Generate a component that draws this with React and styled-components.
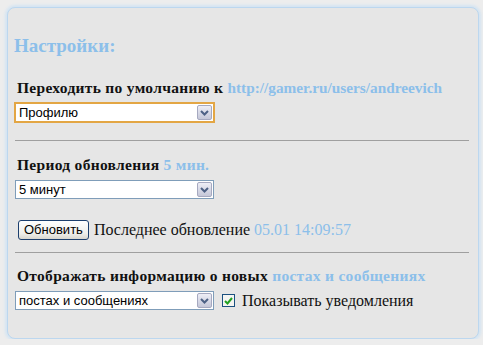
import React from "react";
import styled, { createGlobalStyle } from "styled-components";

const Global = createGlobalStyle`
  body {
    margin: 0;
    background: #ededed;
    font-family: "Liberation Serif", "Times New Roman", serif;
  }
`;

const Panel = styled.div`
  margin: 7px 0 0 7px;
  width: 472px;
  height: 332px;
  box-sizing: border-box;
  background: #e6e6e6;
  border: 1px solid #bcd7ef;
  border-radius: 8px;
  box-shadow: 0 0 3px 2px #d3e4f3;
  padding: 0 7px 0 6px;
`;

const Title = styled.h2`
  margin: 0;
  padding-top: 27px;
  font-size: 19px;
  font-weight: bold;
  color: #8cbfea;
  line-height: 22px;
`;

const Label = styled.div`
  font-size: 15.5px;
  letter-spacing: 0.3px;
  font-weight: bold;
  color: #111;
  line-height: 18px;
  margin-top: ${(p) => p.$top || 0}px;
  padding-left: 3px;
`;

const Accent = styled.span`
  color: #8cbfea;
  font-size: ${(p) => p.$size || 15.5}px;
  letter-spacing: ${(p) => (p.$tight ? "0" : "inherit")};
  font-weight: ${(p) => (p.$bold ? "bold" : "normal")};
`;

const Row = styled.div`
  display: flex;
  align-items: center;
  gap: ${(p) => p.$gap || 6}px;
  margin-top: ${(p) => p.$top || 0}px;
`;

const Select = styled.div`
  display: flex;
  align-items: stretch;
  width: ${(p) => (p.$focus ? 201 : 199)}px;
  height: ${(p) => (p.$focus ? 21 : 19)}px;
  box-sizing: border-box;
  border: ${(p) => (p.$focus ? "2px solid #e3a644" : "1px solid #7f9db9")};
  background: #fff;
  margin-left: ${(p) => (p.$focus ? 0 : 1)}px;
`;

const SelectText = styled.div`
  flex: 1;
  font-family: "Liberation Sans", Arial, sans-serif;
  font-size: 13px;
  line-height: 17px;
  padding-left: 3px;
  color: #000;
`;

const ArrowBox = styled.div`
  width: 15px;
  margin: 1px;
  box-sizing: border-box;
  border: 1px solid #a6a9c0;
  border-radius: 2px;
  background: linear-gradient(180deg, #eeeef6 0%, #d4d6e4 60%, #c5c7d8 100%);
  display: flex;
  align-items: center;
  justify-content: center;
`;

const Divider = styled.hr`
  border: 0;
  border-top: 1px solid #9f9f9f;
  margin: ${(p) => p.$top}px 2px 0 1px;
`;

const Button = styled.button`
  font-family: "Liberation Sans", Arial, sans-serif;
  font-size: 13px;
  height: 20px;
  padding: 0 5px;
  margin-left: 4px;
  border: 1px solid #1c3f6e;
  border-radius: 3px;
  background: linear-gradient(180deg, #ffffff 0%, #eeeeea 70%, #d8d6cf 100%);
  color: #000;
  line-height: 16px;
`;

const Plain = styled.span`
  font-size: 16px;
  color: #111;
`;

const Check = styled.span`
  width: 13px;
  height: 13px;
  box-sizing: border-box;
  border: 1px solid #1c5180;
  background: #f5f5f2;
  display: inline-flex;
  align-items: center;
  justify-content: center;
`;

const CheckRow = styled.label`
  display: flex;
  align-items: center;
  gap: 7px;
  margin-left: 4px;
`;

const Chevron = () => (
  <svg width="9" height="6" viewBox="0 0 9 6">
    <path d="M1 1 L4.5 4.5 L8 1" stroke="#4d6185" strokeWidth="2" fill="none" />
  </svg>
);

const Dropdown = ({ value, focus }) => (
  <Select $focus={focus}>
    <SelectText>{value}</SelectText>
    <ArrowBox>
      <Chevron />
    </ArrowBox>
  </Select>
);

export default function App() {
  return (
    <>
      <Global />
      <Panel>
        <Title>Настройки:</Title>
        <Label $top={22}>
          Переходить по умолчанию к{" "}
          <Accent $bold $tight $size={15.3}>
            http://gamer.ru/users/andreevich
          </Accent>
        </Label>
        <Row $top={5}>
          <Dropdown value="Профилю" focus />
        </Row>
        <Divider $top={17} />
        <Label $top={15}>
          Период обновления <Accent $bold>5 мин.</Accent>
        </Label>
        <Row $top={6}>
          <Dropdown value="5 минут" />
        </Row>
        <Row $top={21} $gap={5}>
          <Button>Обновить</Button>
          <Plain>
            Последнее обновление <Accent $size={16}>05.01 14:09:57</Accent>
          </Plain>
        </Row>
        <Divider $top={12} />
        <Label $top={14}>
          Отображать информацию о новых{" "}
          <Accent $bold>постах и сообщениях</Accent>
        </Label>
        <Row $top={6} $gap={4}>
          <Dropdown value="постах и сообщениях" />
          <CheckRow>
            <Check>
              <svg width="9" height="8" viewBox="0 0 9 8">
                <path d="M1 4 L3.5 6.5 L8 1" stroke="#21a121" strokeWidth="2" fill="none" />
              </svg>
            </Check>
            <Plain>Показывать уведомления</Plain>
          </CheckRow>
        </Row>
      </Panel>
    </>
  );
}
